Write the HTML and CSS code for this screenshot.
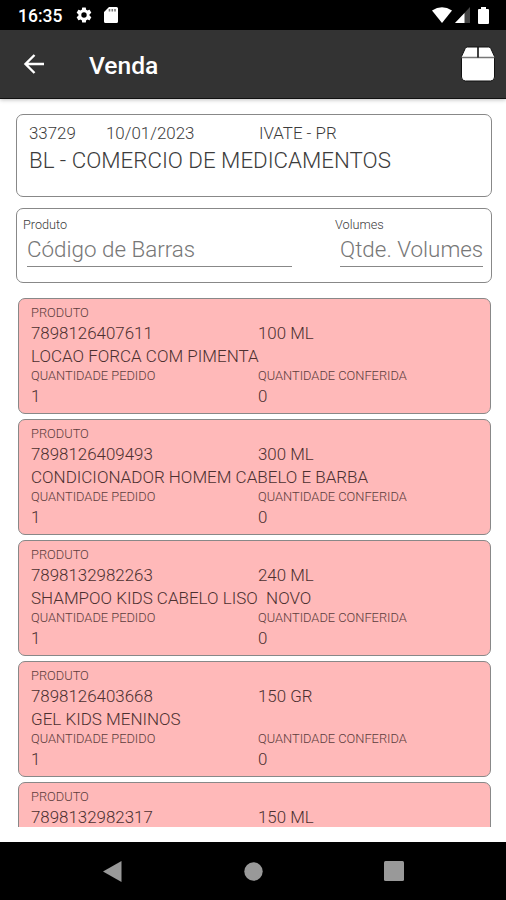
FILE: index.html
```html
<!DOCTYPE html>
<html lang="pt-BR">
<head>
    <meta charset="UTF-8">
    <meta name="viewport" content="width=device-width, initial-scale=1.0">
    <title>Venda</title>
    <link rel="stylesheet" href="styles.css">
</head>
<body>
    <div class="status-bar">
        <span class="clock">16:35</span>
        <svg class="gear" width="18" height="18" viewBox="0 0 24 24" fill="#fff">
            <path d="M19.4 13c.04-.3.06-.65.06-1s-.02-.7-.07-1l2.1-1.6c.2-.15.25-.42.12-.64l-2-3.46c-.12-.22-.37-.3-.6-.22l-2.5 1a7.3 7.3 0 0 0-1.7-.98l-.37-2.65A.5.5 0 0 0 14 2h-4a.5.5 0 0 0-.5.42l-.37 2.65c-.6.25-1.18.58-1.7.98l-2.48-1c-.23-.1-.48 0-.6.22l-2 3.46c-.13.22-.07.5.12.64L4.57 11c-.05.3-.07.66-.07 1s.02.7.07 1l-2.1 1.65c-.2.15-.25.42-.12.64l2 3.46c.12.22.37.3.6.22l2.5-1c.5.4 1.07.72 1.68.97l.38 2.65c.04.24.24.41.49.41h4c.25 0 .45-.17.5-.42l.37-2.65c.6-.25 1.17-.58 1.7-.97l2.48 1c.23.08.48 0 .6-.22l2-3.46a.5.5 0 0 0-.12-.64zM12 15.6a3.6 3.6 0 1 1 0-7.2 3.6 3.6 0 0 1 0 7.2z"/>
        </svg>
        <svg class="sd-card" width="14" height="16" viewBox="0 0 14 16">
            <path d="M5 0h7.5A1.5 1.5 0 0 1 14 1.5v13a1.5 1.5 0 0 1-1.5 1.5h-11A1.5 1.5 0 0 1 0 14.5V5z" fill="#fff"/>
            <path d="M5.5 2v2.5M8.3 2v2.5M11 2v2.5" stroke="#777" stroke-width="1.6"/>
        </svg>
        <div class="system-icons">
            <svg width="20" height="16" viewBox="0 0 20 16">
                <path d="M0 3.6Q10-3 20 3.6L10 16z" fill="#fff"/>
            </svg>
            <svg width="15" height="16" viewBox="0 0 15 16">
                <path d="M15 0v16H0z" fill="#444"/>
                <path d="M9.5 6v10H0z" fill="#fff"/>
            </svg>
            <svg class="battery" width="11" height="17" viewBox="0 0 11 17">
                <path d="M3 0h5v2h2a1 1 0 0 1 1 1v13a1 1 0 0 1-1 1H1a1 1 0 0 1-1-1V3a1 1 0 0 1 1-1h2z" fill="#fff"/>
            </svg>
        </div>
    </div>

    <header class="app-bar">
        <svg class="back" width="22" height="20" viewBox="0 0 22 20" fill="none" stroke="#fff" stroke-width="2.4">
            <path d="M21 10H2.5M11.5 1L2.5 10l9 9"/>
        </svg>
        <h1>Venda</h1>
        <svg class="box" width="36" height="36" viewBox="0 0 36 36">
            <path d="M7.5 1h21q1.500 0 2.300 1.500l3.700 8V31a4 4 0 0 1-4 4h-25a4 4 0 0 1-4-4V10.500l3.700-8Q6 1 7.500 1z" fill="#fff" stroke="#111" stroke-width="1"/>
            <path d="M1.5 11.500h33" stroke="#777" stroke-width="1.6"/>
            <path d="M18 1v10.500" stroke="#111" stroke-width="1.6"/>
        </svg>
    </header>

    <main>
        <section class="order">
            <div class="order-info">
                <span class="number">33729</span>
                <span class="date">10/01/2023</span>
                <span>IVATE - PR</span>
            </div>
            <div class="customer">BL - COMERCIO DE MEDICAMENTOS</div>
        </section>

        <form class="entry">
            <div class="field product">
                <label for="barcode">Produto</label>
                <input type="text" id="barcode" placeholder="Código de Barras">
            </div>
            <div class="field volumes">
                <label for="volumes">Volumes</label>
                <input type="text" id="volumes" placeholder="Qtde. Volumes">
            </div>
        </form>

        <div class="items">
            <div class="item">
                <div class="label">PRODUTO</div>
                <div class="row code"><span>7898126407611</span><span>100 ML</span></div>
                <div class="name">LOCAO FORCA COM PIMENTA</div>
                <div class="row label"><span>QUANTIDADE PEDIDO</span><span>QUANTIDADE CONFERIDA</span></div>
                <div class="row qty"><span>1</span><span>0</span></div>
            </div>
            <div class="item">
                <div class="label">PRODUTO</div>
                <div class="row code"><span>7898126409493</span><span>300 ML</span></div>
                <div class="name">CONDICIONADOR HOMEM CABELO E BARBA</div>
                <div class="row label"><span>QUANTIDADE PEDIDO</span><span>QUANTIDADE CONFERIDA</span></div>
                <div class="row qty"><span>1</span><span>0</span></div>
            </div>
            <div class="item">
                <div class="label">PRODUTO</div>
                <div class="row code"><span>7898132982263</span><span>240 ML</span></div>
                <div class="name">SHAMPOO KIDS CABELO LISO  NOVO</div>
                <div class="row label"><span>QUANTIDADE PEDIDO</span><span>QUANTIDADE CONFERIDA</span></div>
                <div class="row qty"><span>1</span><span>0</span></div>
            </div>
            <div class="item">
                <div class="label">PRODUTO</div>
                <div class="row code"><span>7898126403668</span><span>150 GR</span></div>
                <div class="name">GEL KIDS MENINOS</div>
                <div class="row label"><span>QUANTIDADE PEDIDO</span><span>QUANTIDADE CONFERIDA</span></div>
                <div class="row qty"><span>1</span><span>0</span></div>
            </div>
            <div class="item">
                <div class="label">PRODUTO</div>
                <div class="row code"><span>7898132982317</span><span>150 ML</span></div>
            </div>
        </div>
    </main>

    <nav class="nav-bar">
        <svg width="19" height="21" viewBox="0 0 19 21"><path d="M0 10.5L18.5 0v21z" fill="#999"/></svg>
        <svg width="19" height="19" viewBox="0 0 19 19"><circle cx="9.5" cy="9.5" r="9.2" fill="#999"/></svg>
        <svg width="20" height="20" viewBox="0 0 20 20"><rect width="20" height="20" rx="1.5" fill="#999"/></svg>
    </nav>
</body>
</html>
```

FILE: styles.css
```css
* {
    box-sizing: border-box;
}
body {
    font-family: Roboto, "Noto Sans", sans-serif;
    font-weight: 300;
    background-color: #fff;
    color: #3c3c3c;
    margin: 0;
    height: 900px;
    display: flex;
    flex-direction: column;
    overflow: hidden;
}
svg {
    display: block;
    flex-shrink: 0;
}
.status-bar {
    background-color: #000;
    color: #fff;
    height: 30px;
    padding: 0 17px 0 18px;
    display: flex;
    align-items: center;
    flex-shrink: 0;
}
.clock {
    font-size: 17.5px;
    font-weight: 500;
    padding-top: 1px;
    width: 57px;
}
.sd-card {
    margin-left: 11px;
}
.system-icons {
    display: flex;
    align-items: center;
    gap: 3px;
    margin-left: auto;
}
.battery {
    margin-left: 5px;
}
.app-bar {
    background-color: #333;
    color: #fff;
    height: 69px;
    padding: 0 10px 1px 23px;
    border-bottom: 1px solid #111;
    box-shadow: 0 1px 4px rgba(0, 0, 0, 0.25);
    display: flex;
    align-items: center;
    flex-shrink: 0;
}
.app-bar h1 {
    font-size: 24.6px;
    font-weight: 500;
    margin: 3px 0 0 44px;
}
.box {
    margin-left: auto;
}
main {
    flex: 1;
    min-height: 0;
    padding: 15px 14px 15px 16px;
    display: flex;
    flex-direction: column;
}
.order {
    border: 1px solid #888;
    border-radius: 7px;
    height: 83px;
    padding: 6px 12px;
    flex-shrink: 0;
}
.order-info {
    display: flex;
    font-size: 16.9px;
    line-height: 24px;
}
.order-info .number {
    width: 77px;
}
.order-info .date {
    width: 153px;
}
.customer {
    font-size: 22.3px;
    line-height: 30px;
    white-space: nowrap;
}
.entry {
    border: 1px solid #888;
    border-radius: 7px;
    height: 75px;
    margin: 11px 0 15px;
    padding: 8px 8px 0 6px;
    display: flex;
    justify-content: space-between;
    flex-shrink: 0;
}
.field label {
    display: block;
    font-size: 12.7px;
    line-height: 15px;
}
.field input {
    display: block;
    width: 100%;
    height: 35px;
    padding: 0 0 1px;
    border: none;
    border-bottom: 1px solid #888;
    background: none;
    font-family: inherit;
    font-size: 22.4px;
    font-weight: 300;
}
.field input::placeholder {
    color: #777;
    opacity: 1;
}
.product {
    width: 269px;
}
.product input {
    width: 265px;
    margin-left: 4px;
}
.volumes {
    width: 148px;
}
.volumes input {
    width: 143px;
    margin-left: 5px;
}
.items {
    flex: 1;
    min-height: 0;
    overflow: hidden;
    padding: 0 1px 0 2px;
}
.item {
    background-color: #ffb9b9;
    border: 1px solid #888;
    border-radius: 7px;
    color: #4c3030;
    height: 116px;
    margin-bottom: 4.9px;
    padding: 6px 12px;
}
.row {
    display: grid;
    grid-template-columns: 227px 1fr;
}
.label {
    font-size: 12.85px;
    line-height: 16px;
    opacity: 0.9;
}
.code {
    font-size: 16.9px;
    line-height: 25px;
}
.name {
    font-size: 17px;
    line-height: 20px;
    padding-bottom: 2px;
    white-space: pre;
}
.qty {
    font-size: 16.9px;
    line-height: 25px;
}
.nav-bar {
    background-color: #000;
    height: 58px;
    padding: 0 102px 0 103px;
    display: flex;
    align-items: center;
    justify-content: space-between;
    flex-shrink: 0;
}
```
